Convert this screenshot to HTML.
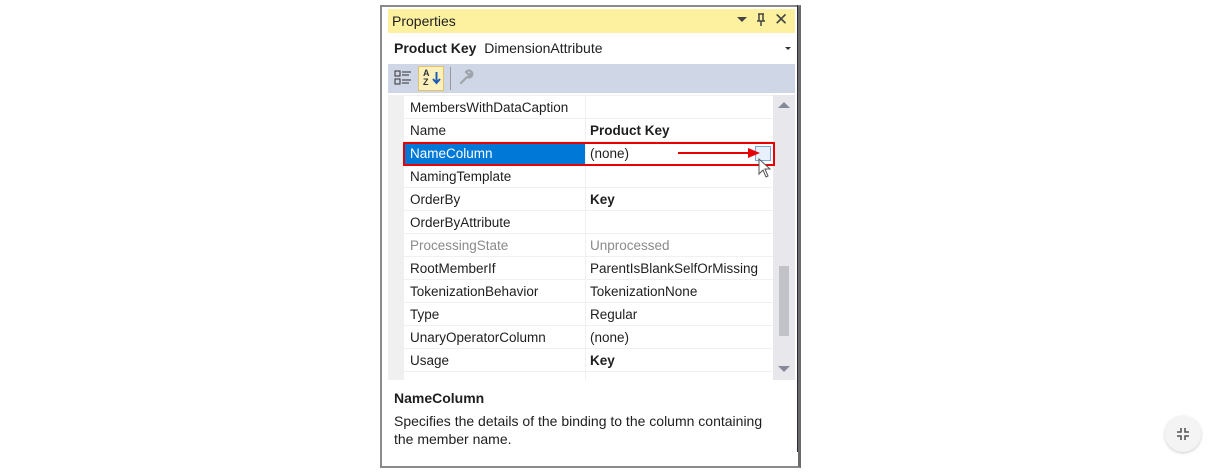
<!DOCTYPE html>
<html><head><style>
body{margin:0;width:1221px;height:473px;background:#fff;font-family:"Liberation Sans",sans-serif;position:relative;overflow:hidden;color:#1e1e1e}
.a{position:absolute}
.row{position:absolute;left:404px;width:369px;height:22px;font-size:13.5px;line-height:24px;background:#fff}
.row .n{position:absolute;left:6px;top:0}
.row .v{position:absolute;left:186px;top:0}
.row .sep{position:absolute;left:181px;top:0;width:1px;height:22px;background:#f0f0f0}
b{font-weight:bold}
</style></head><body>
<div class="a" style="left:380px;top:5px;width:416px;height:459px;border:2px solid #8a8a8a;border-right:3px solid #6a6a6a;background:#fff"></div>
<div class="a" style="left:797px;top:5px;width:1px;height:447px;background:#2b2b40"></div>
<div class="a" style="left:388px;top:9px;width:407px;height:24px;background:#fdf1a0"></div>
<div class="a" style="left:392px;top:13px;font-size:14px;color:#1e1e1e">Properties</div>
<div class="a" style="left:737px;top:17px;width:0;height:0;border-left:5px solid transparent;border-right:5px solid transparent;border-top:5px solid #444"></div>
<svg class="a" style="left:755px;top:13px" width="12" height="14"><path d="M3 1H9M4 1V8M8 1V8M2 8H10M6 8V13" fill="none" stroke="#444" stroke-width="1.5"/></svg>
<div class="a" style="left:774px;top:10px;font-size:17px;color:#444">✕</div>
<div class="a" style="left:394px;top:40px;font-size:14px"><b>Product Key</b>&nbsp; DimensionAttribute</div>
<div class="a" style="left:785px;top:47px;width:0;height:0;border-left:3px solid transparent;border-right:3px solid transparent;border-top:3px solid #333"></div>
<div class="a" style="left:388px;top:64px;width:407px;height:29px;background:#cfd6e5"></div>
<svg class="a" style="left:394px;top:70px" width="18" height="16"><rect x="1" y="1" width="5" height="5" fill="none" stroke="#333"/><rect x="1" y="9" width="5" height="5" fill="none" stroke="#333"/><path d="M8 2H17M8 5H15M8 10H17M8 13H15" stroke="#333"/></svg>
<div class="a" style="left:418px;top:66px;width:26px;height:25px;background:#fcf0bd;border:1px solid #e5c365;box-sizing:border-box"></div>
<div class="a" style="left:423px;top:69px;font-size:9px;line-height:9px;font-weight:bold;color:#333">A<br>Z</div>
<svg class="a" style="left:432px;top:71px" width="9" height="14"><path d="M4.5 1V12M1 8L4.5 12L8 8" fill="none" stroke="#1e5fb4" stroke-width="2"/></svg>
<div class="a" style="left:450px;top:67px;width:1px;height:23px;background:#999"></div>
<svg class="a" style="left:458px;top:69px" width="16" height="16"><path d="M3 14L9 8M9 8A3.5 3.5 0 1 0 8 3L10 5L11 6L13 4A3.5 3.5 0 0 1 9 8Z" fill="none" stroke="#a0a4ac" stroke-width="2.2" stroke-linecap="round"/></svg>
<div class="a" style="left:388px;top:95px;width:407px;height:285px;background:#f0f0f0"></div>
<div class="row" style="top:96px"><span class="n">MembersWithDataCaption</span><span class="sep"></span></div>
<div class="row" style="top:119px"><span class="n">Name</span><span class="sep"></span><span class="v"><b>Product Key</b></span></div>
<div class="row" style="top:142px"><span class="n" style="left:0;width:181px;height:22px;background:#0078d7;color:#fff;padding-left:6px;box-sizing:border-box">NameColumn</span><span class="sep"></span><span class="v">(none)</span></div>
<div class="row" style="top:165px"><span class="n">NamingTemplate</span><span class="sep"></span></div>
<div class="row" style="top:188px"><span class="n">OrderBy</span><span class="sep"></span><span class="v"><b>Key</b></span></div>
<div class="row" style="top:211px"><span class="n">OrderByAttribute</span><span class="sep"></span></div>
<div class="row" style="top:234px;color:#8a8a8a"><span class="n">ProcessingState</span><span class="sep"></span><span class="v">Unprocessed</span></div>
<div class="row" style="top:257px"><span class="n">RootMemberIf</span><span class="sep"></span><span class="v">ParentIsBlankSelfOrMissing</span></div>
<div class="row" style="top:280px"><span class="n">TokenizationBehavior</span><span class="sep"></span><span class="v">TokenizationNone</span></div>
<div class="row" style="top:303px"><span class="n">Type</span><span class="sep"></span><span class="v">Regular</span></div>
<div class="row" style="top:326px"><span class="n">UnaryOperatorColumn</span><span class="sep"></span><span class="v">(none)</span></div>
<div class="row" style="top:349px"><span class="n">Usage</span><span class="sep"></span><span class="v"><b>Key</b></span></div>
<div class="row" style="top:372px;height:8px;overflow:hidden"><span class="sep"></span></div>
<div class="a" style="left:773px;top:95px;width:22px;height:285px;background:#e8e8ec"></div>
<div class="a" style="left:778px;top:102px;border-left:6px solid transparent;border-right:6px solid transparent;border-bottom:6px solid #868999"></div>
<div class="a" style="left:778px;top:366px;border-left:6px solid transparent;border-right:6px solid transparent;border-top:6px solid #868999"></div>
<div class="a" style="left:779px;top:266px;width:10px;height:70px;background:#c2c3c9"></div>
<div class="a" style="left:755px;top:146px;width:16px;height:15px;border:1px solid #7aa7d8;background:#e8f1fb;box-sizing:border-box"></div>
<div class="a" style="left:403px;top:142px;width:372px;height:24px;border:2px solid #e60000;box-sizing:border-box"></div>
<div class="a" style="left:678px;top:152px;width:72px;height:2px;background:#e60000"></div>
<div class="a" style="left:748px;top:148px;border-top:5px solid transparent;border-bottom:5px solid transparent;border-left:12px solid #e60000"></div>
<svg class="a" style="left:758px;top:158px" width="16" height="22"><path d="M1 1 L1 16 L5 12 L8 19 L10 18 L7 11 L12 11 Z" fill="#fff" stroke="#555" stroke-width="1"/></svg>
<div class="a" style="left:394px;top:390px;font-size:14px"><b>NameColumn</b></div>
<div class="a" style="left:394px;top:412px;font-size:14px;line-height:18px;width:385px">Specifies the details of the binding to the column containing the member name.</div>
<div class="a" style="left:1165px;top:416px;width:36px;height:36px;border-radius:50%;background:#f4f4f4;box-shadow:0 1px 3px rgba(0,0,0,.2)"></div>
<svg class="a" style="left:1176px;top:427px" width="14" height="14"><path d="M5 1V5H1M9 1V5H13M5 13V9H1M9 13V9H13" fill="none" stroke="#555" stroke-width="1.6"/></svg>
</body></html>
